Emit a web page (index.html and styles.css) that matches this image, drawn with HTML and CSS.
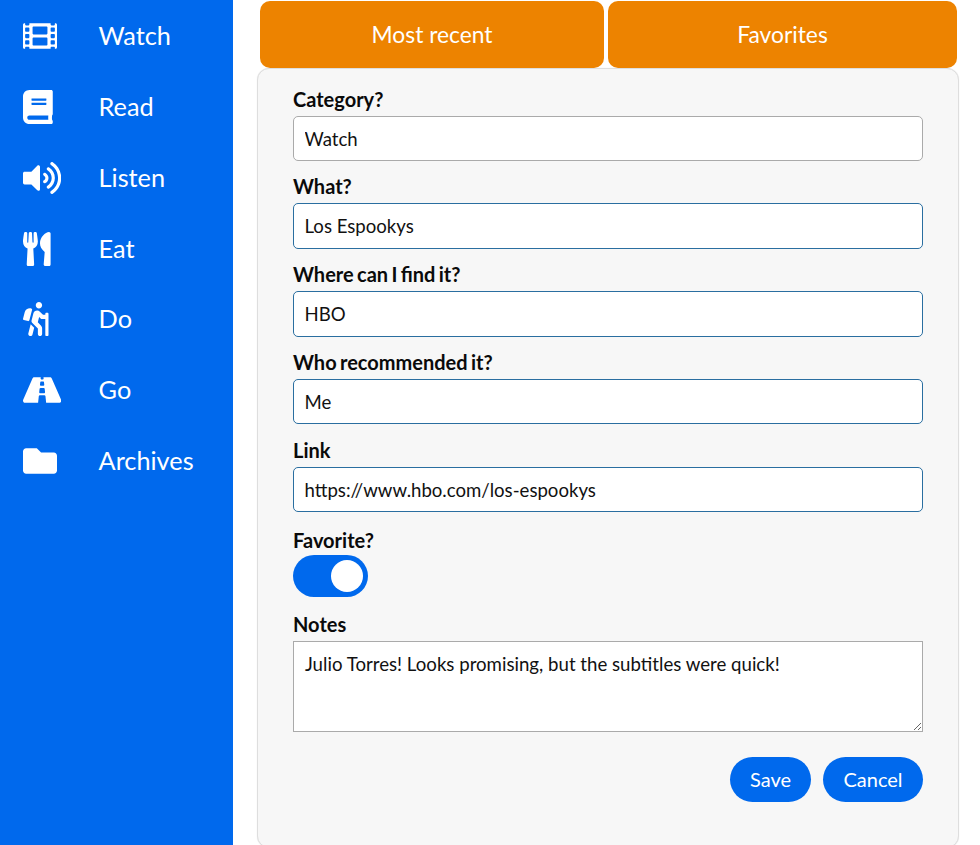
FILE: index.html
```html
<!DOCTYPE html>
<html lang="en">
<head>
<meta charset="utf-8">
<title>Watch</title>
<link rel="stylesheet" href="styles.css">
</head>
<body>
<div class="app">
  <nav class="sidebar">
    <a class="nav-item"><span class="nav-icon"><svg class="ic" viewBox="0 0 512 512" width="34" height="34"><path d="M488 64h-8v20c0 6.6-5.4 12-12 12h-40c-6.6 0-12-5.4-12-12V64H96v20c0 6.6-5.4 12-12 12H44c-6.6 0-12-5.4-12-12V64h-8C10.7 64 0 74.7 0 88v336c0 13.3 10.7 24 24 24h8v-20c0-6.6 5.4-12 12-12h40c6.6 0 12 5.4 12 12v20h320v-20c0-6.6 5.4-12 12-12h40c6.6 0 12 5.4 12 12v20h8c13.3 0 24-10.7 24-24V88c0-13.3-10.7-24-24-24zM96 372c0 6.6-5.4 12-12 12H44c-6.6 0-12-5.4-12-12v-40c0-6.6 5.4-12 12-12h40c6.6 0 12 5.4 12 12v40zm0-96c0 6.6-5.4 12-12 12H44c-6.6 0-12-5.4-12-12v-40c0-6.6 5.4-12 12-12h40c6.6 0 12 5.4 12 12v40zm0-96c0 6.6-5.4 12-12 12H44c-6.6 0-12-5.4-12-12v-40c0-6.6 5.4-12 12-12h40c6.6 0 12 5.4 12 12v40zm272 208c0 6.6-5.4 12-12 12H156c-6.6 0-12-5.4-12-12v-96c0-6.6 5.4-12 12-12h200c6.6 0 12 5.4 12 12v96zm0-168c0 6.6-5.4 12-12 12H156c-6.6 0-12-5.4-12-12v-96c0-6.6 5.4-12 12-12h200c6.6 0 12 5.4 12 12v96zm112 152c0 6.6-5.4 12-12 12h-40c-6.6 0-12-5.4-12-12v-40c0-6.6 5.4-12 12-12h40c6.6 0 12 5.4 12 12v40zm0-96c0 6.6-5.4 12-12 12h-40c-6.6 0-12-5.4-12-12v-40c0-6.6 5.4-12 12-12h40c6.6 0 12 5.4 12 12v40zm0-96c0 6.6-5.4 12-12 12h-40c-6.6 0-12-5.4-12-12v-40c0-6.6 5.4-12 12-12h40c6.6 0 12 5.4 12 12v40z"/></svg></span>Watch</a>
    <a class="nav-item"><span class="nav-icon"><svg class="ic" viewBox="0 0 448 512" width="29.75" height="34"><path d="M448 360V24c0-13.3-10.7-24-24-24H96C43 0 0 43 0 96v320c0 53 43 96 96 96h328c13.3 0 24-10.7 24-24v-16c0-7.5-3.5-14.3-8.9-18.7-4.2-15.4-4.2-59.3 0-74.7 5.4-4.3 8.9-11.1 8.9-18.6zM128 134c0-3.3 2.7-6 6-6h212c3.3 0 6 2.7 6 6v20c0 3.3-2.7 6-6 6H134c-3.3 0-6-2.7-6-6v-20zm0 64c0-3.3 2.7-6 6-6h212c3.3 0 6 2.7 6 6v20c0 3.3-2.7 6-6 6H134c-3.3 0-6-2.7-6-6v-20zm253.4 250H96c-17.7 0-32-14.3-32-32 0-17.6 14.4-32 32-32h285.4c-1.9 17.1-1.9 46.9 0 64z"/></svg></span>Read</a>
    <a class="nav-item"><span class="nav-icon"><svg class="ic" viewBox="0 0 576 512" width="38.25" height="34"><path d="M215.03 71.05L126.06 160H24c-13.26 0-24 10.74-24 24v144c0 13.25 10.74 24 24 24h102.06l88.97 88.95c15.03 15.03 40.97 4.47 40.97-16.97V88.02c0-21.46-25.96-31.98-40.97-16.97zm233.32-51.08c-11.17-7.33-26.18-4.24-33.51 6.95-7.34 11.17-4.22 26.18 6.95 33.51 66.27 43.49 105.82 116.6 105.82 195.58 0 78.98-39.55 152.09-105.82 195.58-11.17 7.32-14.29 22.34-6.95 33.5 7.04 10.71 21.93 14.56 33.51 6.95C528.27 439.58 576 351.33 576 256S528.27 72.43 448.35 19.97zM480 256c0-63.53-32.06-121.94-85.77-156.24-11.19-7.14-26.03-3.82-33.12 7.46s-3.78 26.21 7.41 33.36C408.27 165.97 432 209.11 432 256s-23.73 90.03-63.48 115.42c-11.19 7.14-14.5 22.07-7.41 33.36 6.51 10.36 21.12 15.14 33.12 7.46C447.94 377.94 480 319.54 480 256zm-141.77-76.87c-11.58-6.33-26.19-2.16-32.61 9.45-6.39 11.61-2.16 26.2 9.45 32.61C327.98 228.28 336 241.63 336 256c0 14.38-8.02 27.72-20.92 34.81-11.61 6.41-15.84 21-9.45 32.61 6.43 11.66 21.05 15.8 32.61 9.45 28.23-15.55 45.77-45 45.77-76.88s-17.54-61.32-45.78-76.86z"/></svg></span>Listen</a>
    <a class="nav-item"><span class="nav-icon"><svg class="ic" viewBox="0 0 416 512" width="27.6" height="34"><path d="M207.9 15.2c.8 4.7 16.1 94.5 16.1 128.8 0 52.3-27.8 89.6-68.9 104.6L168 486.7c.7 13.7-10.2 25.3-24 25.3H80c-13.7 0-24.7-11.5-24-25.3l12.9-238.1C27.7 233.6 0 196.2 0 144 0 109.6 15.3 19.9 16.1 15.2 19.3-5.1 61.4-5.4 64 16.3v141.2c1.3 3.4 15.1 3.2 16 0 1.4-25.3 7.9-139.2 8-141.8 3.3-20.8 44.7-20.8 47.9 0 .2 2.7 6.6 116.5 8 141.8.9 3.2 14.8 3.4 16 0V16.3c2.6-21.6 44.8-21.4 48-1.1zm119.2 285.7l-15 185.1c-1.2 14 9.9 26 23.9 26h56c13.3 0 24-10.7 24-24V24c0-13.2-10.7-24-24-24-82.5 0-221.4 178.5-64.9 300.9z"/></svg></span>Eat</a>
    <a class="nav-item"><span class="nav-icon"><svg class="ic" viewBox="0 0 384 512" width="25.5" height="34"><path d="M80.95 472.23c-4.28 17.16 6.14 34.53 23.28 38.81 2.61.66 5.22.95 7.8.95 14.33 0 27.37-9.7 31.02-24.23l25.24-100.97-52.78-52.78-34.56 138.22zm14.89-196.12L137 117c2.19-8.42-3.14-16.95-11.92-19.06-43.88-10.52-88.35 15.07-99.32 57.17L.49 253.24c-2.19 8.42 3.14 16.95 11.92 19.06l63.56 15.25c8.79 2.1 17.68-3.02 19.87-11.44zM368 160h-16c-8.84 0-16 7.16-16 16v16h-34.75l-46.78-46.78C243.38 134.11 228.61 128 212.91 128c-27.02 0-50.47 18.3-57.03 44.52l-26.92 107.72a32.012 32.012 0 0 0 8.42 30.39L224 397.25V480c0 17.67 14.33 32 32 32s32-14.33 32-32v-82.75c0-17.09-6.66-33.16-18.75-45.25l-46.82-46.82c.15-.5.49-.89.62-1.41l19.89-79.57 22.43 22.43c6 6 14.14 9.38 22.62 9.38h48v240c0 8.84 7.16 16 16 16h16c8.84 0 16-7.16 16-16V176c.01-8.84-7.15-16-15.99-16zM240 96c26.51 0 48-21.49 48-48S266.51 0 240 0s-48 21.49-48 48 21.49 48 48 48z"/></svg></span>Do</a>
    <a class="nav-item"><span class="nav-icon"><svg class="ic" viewBox="0 0 576 512" width="38.25" height="34"><path d="M573.19 402.67l-139.79-320C428.43 71.29 417.6 64 405.68 64h-97.59l2.45 23.16c.5 4.72-3.21 8.84-7.96 8.84h-29.16c-4.75 0-8.46-4.12-7.96-8.84L267.91 64h-97.59c-11.93 0-22.76 7.29-27.73 18.67L2.8 402.67C-6.45 423.86 8.31 448 30.54 448h196.84l10.31-97.68c.86-8.14 7.72-14.32 15.91-14.32h68.8c8.19 0 15.05 6.18 15.91 14.32L348.62 448h196.84c22.23 0 36.99-24.14 27.73-45.33zM260.4 135.16a8 8 0 0 1 7.96-7.16h39.29c4.09 0 7.53 3.09 7.96 7.16l4.6 43.58c.75 7.09-4.81 13.26-11.93 13.26h-40.54c-7.13 0-12.68-6.17-11.93-13.26l4.59-43.58zM315.64 304h-55.29c-9.5 0-16.91-8.23-15.91-17.68l5.07-48c.86-8.14 7.72-14.32 15.91-14.32h45.15c8.19 0 15.05 6.18 15.91 14.32l5.07 48c1 9.45-6.41 17.68-15.91 17.68z"/></svg></span>Go</a>
    <a class="nav-item"><span class="nav-icon"><svg class="ic" viewBox="0 0 512 512" width="34" height="34"><path d="M464 128H272l-64-64H48C21.49 64 0 85.49 0 112v288c0 26.51 21.49 48 48 48h416c26.51 0 48-21.49 48-48V176c0-26.51-21.49-48-48-48z"/></svg></span>Archives</a>
  </nav>
  <main class="main">
    <div class="tabs">
      <button class="tab tab-recent">Most recent</button>
      <button class="tab tab-fav">Favorites</button>
    </div>
    <form class="panel">
      <div class="field">
        <label class="label">Category?</label>
        <input class="input first" value="Watch">
      </div>
      <div class="field">
        <label class="label">What?</label>
        <input class="input touched" value="Los Espookys">
      </div>
      <div class="field">
        <label class="label">Where can I find it?</label>
        <input class="input touched" value="HBO">
      </div>
      <div class="field field-compact">
        <label class="label">Who recommended it?</label>
        <input class="input touched first" value="Me">
      </div>
      <div class="field">
        <label class="label">Link</label>
        <input class="input touched first" value="https://www.hbo.com/los-espookys">
      </div>
      <div class="field field-toggle">
        <label class="label label-tight">Favorite?</label>
        <span class="toggle"><span class="knob"></span></span>
      </div>
      <div class="field">
        <label class="label">Notes</label>
        <textarea class="notes">Julio Torres! Looks promising, but the subtitles were quick!</textarea>
      </div>
      <div class="actions">
        <button type="button" class="pill save">Save</button>
        <button type="button" class="pill cancel">Cancel</button>
      </div>
    </form>
  </main>
</div>
</body>
</html>
```
FILE: styles.css
```css
* { box-sizing: border-box; }
html, body { margin: 0; height: 100%; overflow: hidden; background: #fff; }
body { font-family: Lato, sans-serif; color: #111; }
.app { display: flex; height: 845px; }
.sidebar {
  width: 233px;
  flex: none;
  background: #0069ed;
  padding-top: 0.6px;
}
.nav-item {
  display: flex;
  align-items: center;
  height: 70.85px;
  padding-left: 23px;
  padding-bottom: 2px;
  color: #fff;
  font-size: 25.3px;
}
.nav-icon { width: 75.6px; flex: none; display: flex; align-items: center; margin-top: 2px; }
.ic { fill: #fff; display: block; }
.main { width: 702px; margin-left: 24px; }
.tabs { display: flex; gap: 4px; padding: 1px 2px 0 3px; }
.tab {
  height: 67px;
  border: 0;
  border-radius: 10px;
  padding: 0 0 1px;
  background: #ed8300;
  color: #fff;
  font: 400 22.8px Lato, sans-serif;
}
.tab-recent { width: 344px; }
.tab-fav { width: 349px; }
.panel {
  height: 780px;
  background: #f7f7f7;
  border: 1px solid #dedede;
  border-radius: 12px;
  box-shadow: 0 0 1px rgba(0, 0, 0, .12);
  padding: 19px 35px 0;
}
.field { display: flex; flex-direction: column; margin-bottom: 14px; }
.field-compact { margin-bottom: 15px; }
.label { font-size: 20px; font-weight: 700; line-height: 23px; margin-bottom: 5px; word-spacing: -1.5px; color: #0a0a0a; }
.label-tight { margin-bottom: 3px; }
.input {
  width: 630px;
  height: 46px;
  border: 1px solid #aaa;
  border-radius: 5px;
  padding: 0 11px 0 10.5px;
  background: #fff;
  color: #111;
  font: 400 18.6px Lato, sans-serif;
}
.first { height: 45px; }
.touched { border-color: #2a6ea0; }
.field-toggle { margin-top: 17px; margin-bottom: 16px; }
.toggle {
  width: 75px;
  height: 42px;
  border-radius: 21px;
  background: #0069ed;
  display: flex;
  align-items: center;
  justify-content: flex-end;
  padding-right: 5px;
}
.knob { width: 32px; height: 32px; border-radius: 50%; background: #fff; }
.notes {
  display: block;
  width: 630px;
  height: 91px;
  border: 1px solid #aaa;
  border-radius: 0;
  padding: 11px;
  background: #fff;
  color: #111;
  font: 400 18.65px Lato, sans-serif;
}
.actions { display: flex; justify-content: flex-end; gap: 12px; width: 630px; margin-top: 25px; }
.pill {
  height: 45px;
  padding: 0 0 2px;
  border: 0;
  border-radius: 23px;
  background: #0069ed;
  color: #fff;
  font: 400 20px Lato, sans-serif;
}
.save { width: 81px; }
.cancel { width: 100px; }
```
